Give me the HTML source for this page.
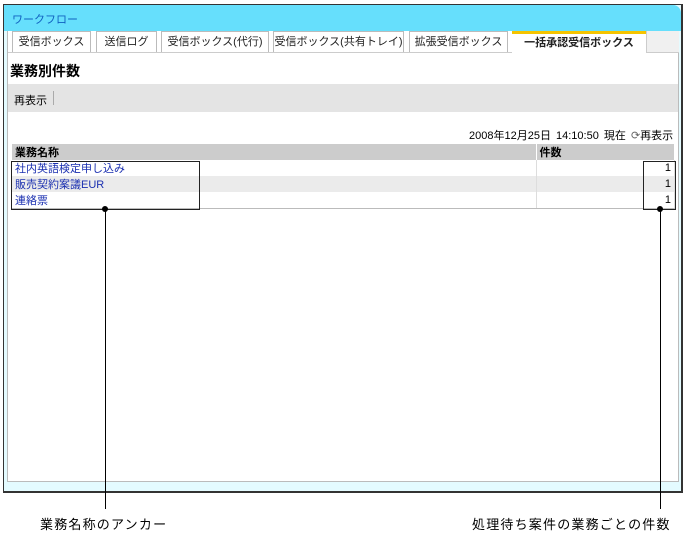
<!DOCTYPE html>
<html><head><meta charset="utf-8"><style>
*{margin:0;padding:0;box-sizing:border-box}
body{width:687px;height:536px;background:#fff;position:relative;font-family:"Liberation Sans","Noto Sans CJK JP",sans-serif;font-size:11px;color:#000;overflow:hidden}
.a{position:absolute}
.frame{left:3px;top:4px;width:680px;height:489px;border:1px solid #333;border-right:2px solid #333;border-bottom:2px solid #333;background:#e4fbff}
.title{left:4px;top:5px;width:677px;height:26px;background:#66dffc;border-top-right-radius:8px}
.title span{position:absolute;left:8px;top:6px;color:#1060c0;font-size:11px}
.panel{left:7px;top:31px;width:672px;height:451px;background:#fff;border:1px solid #bbb;border-top:none}
.tab{top:31px;height:22px;border:1px solid #bbb;border-bottom:none;background:#fff;text-align:center;line-height:21px;font-size:11px;color:#222}
.act{font-weight:bold;border:none;border-top:3px solid #f5c400;line-height:18px}
.bar{left:8px;top:84px;width:670px;height:28px;background:#e4e4e4}
table{position:absolute;left:12px;top:144px;width:663px;border-collapse:collapse;font-size:11px}
td{height:16px;padding:0 3px;border-right:1px solid #ddd}
th{height:15px;background:#ccc;text-align:left;padding:0 3px;font-weight:bold;border-right:1px solid #fff}
.g td{background:#ebebeb}
a{color:#1a2fb0;text-decoration:none}
.box{border:1.5px solid #222}
.dot{width:6px;height:6px;border-radius:3px;background:#000}
.ln{width:1px;background:#000}
</style></head><body>
<div class="a frame"></div>
<div class="a title"><span>ワークフロー</span></div>
<div class="a panel"></div>
<div class="a tab" style="left:12px;width:79px">受信ボックス</div>
<div class="a tab" style="left:96px;width:61px">送信ログ</div>
<div class="a tab" style="left:161px;width:108px">受信ボックス(代行)</div>
<div class="a tab" style="left:273px;width:131px">受信ボックス(共有トレイ)</div>
<div class="a tab" style="left:409px;width:99px">拡張受信ボックス</div>
<div class="a tab act" style="left:512px;width:134px">一括承認受信ボックス</div>
<div class="a" style="left:646px;top:31px;width:33px;height:22px;background:#f0f0f0;border-left:1px solid #ccc;border-bottom:1px solid #ccc"></div>
<div class="a" style="left:8px;top:52px;width:504px;height:1px;background:#ccc"></div>
<div class="a" style="left:10px;top:61px;font-size:14px;font-weight:bold">業務別件数</div>
<div class="a bar"></div>
<div class="a" style="left:14px;top:92px">再表示</div>
<div class="a" style="left:53px;top:91px;width:1px;height:14px;background:#aaa"></div>
<div class="a" style="left:469px;top:127px;word-spacing:2px">2008年12月25日 14:10:50 現在 <span style="color:#666">⟳</span>再表示</div>
<table>
<tr><th style="width:524px">業務名称</th><th>件数</th></tr>
<tr><td><a>社内英語検定申し込み</a></td><td style="text-align:right">1</td></tr>
<tr class="g"><td><a>販売契約案議EUR</a></td><td style="text-align:right">1</td></tr>
<tr><td style="border-bottom:1px solid #bbb"><a>連絡票</a></td><td style="text-align:right;border-bottom:1px solid #bbb">1</td></tr>
</table>
<div class="a box" style="left:11px;top:161px;width:189px;height:49px"></div>
<div class="a box" style="left:643px;top:161px;width:33px;height:49px"></div>
<div class="a dot" style="left:102px;top:206px"></div>
<div class="a dot" style="left:657px;top:206px"></div>
<div class="a ln" style="left:105px;top:209px;height:300px"></div>
<div class="a ln" style="left:660px;top:209px;height:300px"></div>
<div class="a" style="left:40px;top:514px;font-size:13px;letter-spacing:1.2px">業務名称のアンカー</div>
<div class="a" style="left:472px;top:514px;font-size:13px;letter-spacing:1.2px">処理待ち案件の業務ごとの件数</div>
</body></html>
